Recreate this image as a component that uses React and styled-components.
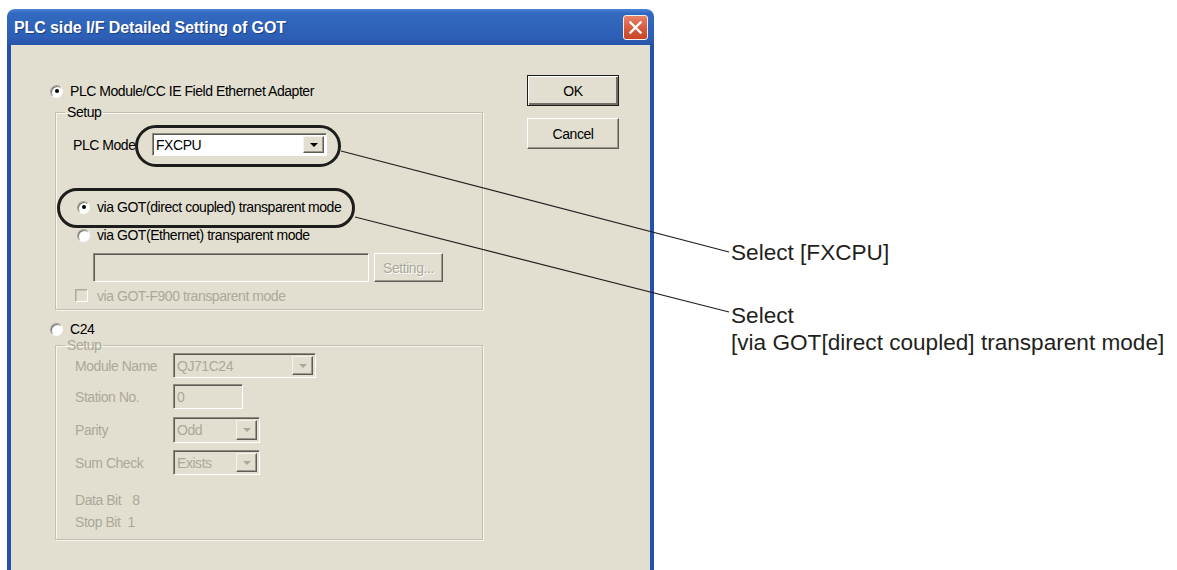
import React from "react";
import styled, { createGlobalStyle } from "styled-components";

const GlobalStyle = createGlobalStyle`
  html, body {
    margin: 0;
    padding: 0;
    background: #fff;
    overflow: hidden;
  }
  body {
    font-family: "Liberation Sans", Arial, sans-serif;
  }
`;

const Stage = styled.div`
  position: relative;
  width: 1177px;
  height: 570px;
  overflow: hidden;
  display: flex;
  align-items: flex-start;
  padding: 9px 0 0 7px;
  box-sizing: border-box;
`;

const Window = styled.div`
  width: 647px;
  height: 600px;
  flex-shrink: 0;
  display: flex;
  flex-direction: column;
`;

const TitleBar = styled.div`
  height: 36px;
  flex-shrink: 0;
  border-radius: 8px 8px 0 0;
  background: linear-gradient(
    to bottom,
    #4a84d6 0%,
    #3269bf 12%,
    #2c5fb5 80%,
    #2853a8 100%
  );
  display: flex;
  align-items: center;
  justify-content: space-between;
  padding: 0 6px 0 7px;
`;

const Title = styled.div`
  color: #fff;
  font: bold 16px "Liberation Sans", Arial, sans-serif;
  letter-spacing: -0.1px;
  text-shadow: 1px 1px 0 rgba(12, 32, 90, 0.55);
  margin-top: 1px;
`;

const CloseButton = styled.div`
  width: 25px;
  height: 25px;
  box-sizing: border-box;
  border: 1px solid #f4efe9;
  border-radius: 3px;
  background: linear-gradient(#e8826a, #d65a3c 55%, #c8462a);
  display: flex;
  align-items: center;
  justify-content: center;
`;

const Body = styled.div`
  flex: 1;
  display: flex;
  align-items: flex-start;
  background: #e2dfd0;
  border-left: 4px solid #2550ac;
  border-right: 4px solid #2550ac;
  padding-left: 39px;
  font: 14px "Liberation Sans", Arial, sans-serif;
  letter-spacing: -0.45px;
  color: #000;
`;

const MainColumn = styled.div`
  width: 433px;
  display: flex;
  flex-direction: column;
`;

const ButtonColumn = styled.div`
  margin-left: 44px;
  margin-top: 30px;
  display: flex;
  flex-direction: column;
  gap: 12px;
`;

const Row = styled.div`
  display: flex;
  align-items: center;
  height: ${({ $h }) => $h || 16}px;
  margin-top: ${({ $mt }) => $mt || 0}px;
  margin-left: ${({ $ml }) => $ml || 0}px;
  gap: ${({ $gap }) => $gap || 0}px;
  color: ${({ $disabled }) => ($disabled ? "#aca899" : "#000")};
  white-space: nowrap;
`;

const Radio = styled.span`
  width: 13px;
  height: 13px;
  box-sizing: border-box;
  flex-shrink: 0;
  border-radius: 50%;
  background: #fff;
  border: 1px solid;
  border-color: #a3a094 #ffffff #ffffff #a3a094;
  box-shadow: inset 1px 1px 0 #75736a;
  display: flex;
  align-items: center;
  justify-content: center;
  &::after {
    content: "";
    width: 4px;
    height: 4px;
    border-radius: 50%;
    background: #000;
    display: ${({ $checked }) => ($checked ? "block" : "none")};
  }
`;

const Check = styled.span`
  width: 13px;
  height: 13px;
  box-sizing: border-box;
  flex-shrink: 0;
  border: 1px solid;
  border-color: #aca899 #ffffff #ffffff #aca899;
  box-shadow: inset 1px 1px 0 #c9c6b8;
  background: #e2dfd0;
`;

const Group = styled.fieldset`
  margin: ${({ $mt }) => $mt || 0}px 0 0 5px;
  padding: 0 0 ${({ $pb }) => $pb || 0}px ${({ $pl }) => $pl || 0}px;
  width: 428px;
  box-sizing: border-box;
  min-width: 0;
  border: 1px solid #c3c0b1;
  box-shadow: 1px 1px 0 #f6f5ee, inset 1px 1px 0 #f6f5ee;
  display: flex;
  flex-direction: column;
`;

/* the legend sits after the fieldset padding, so pull it back to 9px from the border */
const Legend = styled.legend`
  margin-left: ${({ $pl }) => 9 - $pl}px;
  padding: 0 2px;
  line-height: 16px;
  color: ${({ $disabled }) => ($disabled ? "#aca899" : "#000")};
`;

const Label = styled.span`
  width: ${({ $w }) => $w}px;
  flex-shrink: 0;
`;

const Field = styled.div`
  width: ${({ $w }) => $w}px;
  height: ${({ $h }) => $h}px;
  box-sizing: border-box;
  flex-shrink: 0;
  margin-left: ${({ $ml }) => $ml || 0}px;
  border: 1px solid;
  border-color: #8e8b7e #ffffff #ffffff #8e8b7e;
  box-shadow: inset 1px 1px 0 #5b5a53;
  background: ${({ $disabled }) => ($disabled ? "#e2dfd0" : "#fff")};
  color: ${({ $disabled }) => ($disabled ? "#aca899" : "#000")};
  display: flex;
  align-items: center;
  justify-content: space-between;
  padding: 2px 2px 2px 3px;
`;

const DropButton = styled.span`
  width: 21px;
  height: 100%;
  box-sizing: border-box;
  border: 1px solid;
  border-color: #f4f3ec #5d5c55 #5d5c55 #f4f3ec;
  box-shadow: inset -1px -1px 0 #9c998c;
  background: #e2dfd0;
  display: flex;
  align-items: center;
  justify-content: center;
  &::after {
    content: "";
    border-left: 4px solid transparent;
    border-right: 4px solid transparent;
    border-top: 4px solid ${({ $disabled }) => ($disabled ? "#aca899" : "#000")};
  }
`;

const PushButton = styled.div`
  width: ${({ $w }) => $w}px;
  height: ${({ $h }) => $h}px;
  box-sizing: border-box;
  flex-shrink: 0;
  margin-left: ${({ $ml }) => $ml || 0}px;
  border: 1px solid;
  border-color: ${({ $default }) =>
    $default ? "#1c1c1a" : "#ffffff #5d5c55 #5d5c55 #ffffff"};
  box-shadow: ${({ $default }) =>
    $default
      ? "inset 1px 1px 0 #ffffff, inset -2px -2px 0 #6f6d65"
      : "inset -1px -1px 0 #9c998c"};
  background: #e2dfd0;
  color: ${({ $disabled }) => ($disabled ? "#aca899" : "#000")};
  text-shadow: ${({ $disabled }) => ($disabled ? "1px 1px 0 #fff" : "none")};
  display: flex;
  align-items: center;
  justify-content: center;
`;

const Value = styled.span`
  margin-left: ${({ $ml }) => $ml}px;
`;

const Notes = styled.div`
  margin-left: 77px;
  display: flex;
  flex-direction: column;
  font: 22.6px/27px "Liberation Sans", Arial, sans-serif;
  color: #231f20;
  white-space: nowrap;
`;

const Note = styled.div`
  margin-top: ${({ $mt }) => $mt}px;
`;

const Overlay = styled.svg`
  position: absolute;
  left: 0;
  top: 0;
  pointer-events: none;
`;

const DisabledText = styled.span`
  color: #aca899;
`;

const App = () => {
  return (
    <>
      <GlobalStyle />
      <Stage>
        <Window>
          <TitleBar>
            <Title>PLC side I/F Detailed Setting of GOT</Title>
            <CloseButton>
              <svg width="15" height="15" viewBox="0 0 15 15">
                <path
                  d="M2.5 2.5 L12.5 12.5 M12.5 2.5 L2.5 12.5"
                  stroke="#fff"
                  strokeWidth="2.4"
                  strokeLinecap="square"
                />
              </svg>
            </CloseButton>
          </TitleBar>
          <Body>
            <MainColumn>
              <Row $mt={38} $gap={7}>
                <Radio $checked />
                PLC Module/CC IE Field Ethernet Adapter
              </Row>
              <Group $mt={5} $pl={17} $pb={6}>
                <Legend $pl={17}>Setup</Legend>
                <Row $mt={13} $h={23}>
                  <Label $w={79}>PLC Mode</Label>
                  <Field $w={175} $h={23}>
                    FXCPU
                    <DropButton />
                  </Field>
                </Row>
                <Row $mt={43} $ml={4} $gap={7}>
                  <Radio $checked />
                  via GOT(direct coupled) transparent mode
                </Row>
                <Row $mt={12} $ml={4} $gap={7}>
                  <Radio />
                  via GOT(Ethernet) transparent mode
                </Row>
                <Row $mt={10} $h={29}>
                  <Field $w={276} $h={29} $ml={20} $disabled />
                  <PushButton $w={69} $h={29} $ml={5} $disabled>
                    Setting...
                  </PushButton>
                </Row>
                <Row $mt={6} $h={15} $ml={2} $gap={9}>
                  <Check />
                  <DisabledText>via GOT-F900 transparent mode</DisabledText>
                </Row>
              </Group>
              <Row $mt={11} $gap={7}>
                <Radio />
                C24
              </Row>
              <Group $pl={19} $pb={9}>
                <Legend $pl={19} $disabled>
                  Setup
                </Legend>
                <Row $h={25} $disabled>
                  <Label $w={98}>Module Name</Label>
                  <Field $w={143} $h={25} $disabled>
                    QJ71C24
                    <DropButton $disabled />
                  </Field>
                </Row>
                <Row $mt={6} $h={25} $disabled>
                  <Label $w={98}>Station No.</Label>
                  <Field $w={70} $h={25} $disabled>
                    0
                  </Field>
                </Row>
                <Row $mt={8} $h={26} $disabled>
                  <Label $w={98}>Parity</Label>
                  <Field $w={87} $h={26} $disabled>
                    Odd
                    <DropButton $disabled />
                  </Field>
                </Row>
                <Row $mt={7} $h={25} $disabled>
                  <Label $w={98}>Sum Check</Label>
                  <Field $w={87} $h={25} $disabled>
                    Exists
                    <DropButton $disabled />
                  </Field>
                </Row>
                <Row $mt={17} $disabled>
                  Data Bit
                  <Value $ml={11}>8</Value>
                </Row>
                <Row $mt={6} $disabled>
                  Stop Bit
                  <Value $ml={7}>1</Value>
                </Row>
              </Group>
            </MainColumn>
            <ButtonColumn>
              <PushButton $w={92} $h={31} $default>
                OK
              </PushButton>
              <PushButton $w={92} $h={31}>
                Cancel
              </PushButton>
            </ButtonColumn>
          </Body>
        </Window>
        <Notes>
          <Note $mt={230}>Select [FXCPU]</Note>
          <Note $mt={36}>
            Select
            <br />
            [via GOT[direct coupled] transparent mode]
          </Note>
        </Notes>
        <Overlay width="1177" height="570" viewBox="0 0 1177 570">
          <rect
            x="136.5"
            y="126.5"
            width="203"
            height="39"
            rx="19.5"
            fill="none"
            stroke="#1d1d1b"
            strokeWidth="3"
          />
          <rect
            x="58.5"
            y="189.5"
            width="295"
            height="37"
            rx="18.5"
            fill="none"
            stroke="#1d1d1b"
            strokeWidth="3"
          />
          <path
            d="M341 151 L729 252 M355 217 L729 312"
            stroke="#231f20"
            strokeWidth="1.2"
            fill="none"
          />
        </Overlay>
      </Stage>
    </>
  );
};

export default App;
